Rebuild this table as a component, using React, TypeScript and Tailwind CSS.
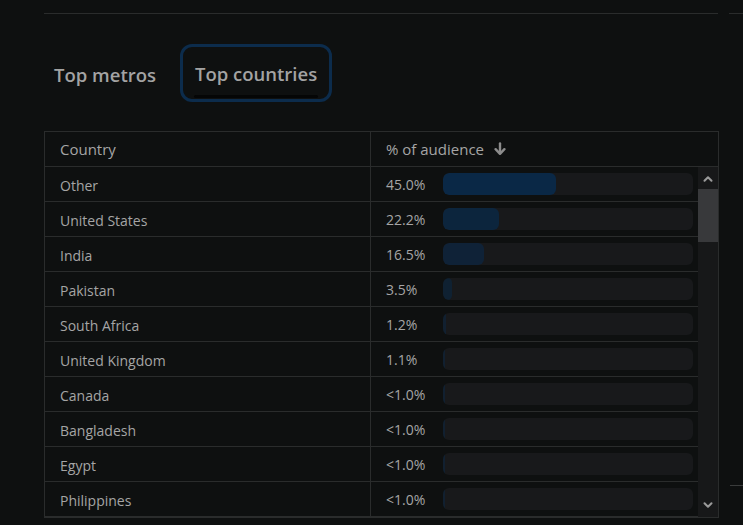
import { ChevronUp, ChevronDown } from "lucide-react";

interface Row {
  country: string;
  label: string;
  pct: number;
  tone: number;
}

const rows: Row[] = [
  { country: "Other", label: "45.0%", pct: 45, tone: 1 },
  { country: "United States", label: "22.2%", pct: 22.2, tone: 0.8 },
  { country: "India", label: "16.5%", pct: 16.5, tone: 0.65 },
  { country: "Pakistan", label: "3.5%", pct: 3.5, tone: 0.55 },
  { country: "South Africa", label: "1.2%", pct: 1, tone: 0.5 },
  { country: "United Kingdom", label: "1.1%", pct: 0.9, tone: 0.5 },
  { country: "Canada", label: "<1.0%", pct: 0.8, tone: 0.5 },
  { country: "Bangladesh", label: "<1.0%", pct: 0.8, tone: 0.5 },
  { country: "Egypt", label: "<1.0%", pct: 0.8, tone: 0.5 },
  { country: "Philippines", label: "<1.0%", pct: 0.8, tone: 0.5 },
];

const SortArrow = () => (
  <svg width="12" height="14" viewBox="0 0 12 14" className="text-[#8c8c8c]">
    <path d="M6 1.5v9" stroke="currentColor" strokeWidth="2.4" strokeLinecap="round" />
    <path d="M1.6 7.2L6 11.8l4.4-4.6" fill="none" stroke="currentColor" strokeWidth="2.4" strokeLinecap="round" strokeLinejoin="round" />
  </svg>
);

const App = () => {
  return (
    <div
      className="h-[525px] w-[743px] overflow-hidden bg-[#0e1010] text-[#a5a5a5]"
      style={{ fontFamily: '"Open Sans", "Noto Sans", sans-serif' }}
    >
      <div className="flex">
        <div className="ml-[44px] mt-[13px] h-px w-[674px] bg-[#2a2c2c]" />
        <div className="ml-[11px] mt-[13px] h-px flex-1 bg-[#2a2c2c]" />
      </div>

      {/* Tabs */}
      <div className="ml-[44px] mt-[30px] flex h-[58px] items-center gap-[14px]">
        <button className="px-[10px] pt-[4px] text-[18.5px] font-semibold text-[#a3a3a3]">
          Top metros
        </button>
        <button className="relative h-[58px] rounded-[12px] border-[3px] border-[#0c2c4c] px-[12px] pt-[2px] text-[18.5px] font-semibold text-[#a3a3a3]">
          Top countries
          <span className="absolute bottom-[1px] left-[11px] right-[11px] h-[3px] rounded-full bg-[#050606]" />
        </button>
      </div>

      <div className="flex">
        {/* Table */}
        <div className="ml-[44px] mt-[29px] w-[675px] border border-[#2a2c2c] text-[14px]">
          <div className="flex h-[35px] items-center border-b border-[#2a2c2c] text-[15px]">
            <div className="w-[326px] border-r border-[#2a2c2c] pl-[15px] leading-[34px]">
              Country
            </div>
            <div className="flex items-center gap-[10px] pl-[15px]">
              % of audience
              <SortArrow />
            </div>
          </div>
          <div className="flex h-[350px] overflow-hidden">
            <div className="flex-1">
              {rows.map((r) => (
                <div key={r.country} className="flex h-[35px] items-center border-b border-[#2a2c2c]">
                  <div className="h-full w-[326px] border-r border-[#2a2c2c] pl-[15px] pt-[2px] leading-[34px]">
                    {r.country}
                  </div>
                  <div className="w-[72px] pl-[15px] pt-[1px]">{r.label}</div>
                  <div className="mr-[5px] h-[22px] flex-1 overflow-hidden rounded-[6px] bg-[#18191b]">
                    <div
                      className="h-full rounded-[6px] bg-[#0a2846]"
                      style={{ width: `${r.pct}%`, opacity: r.tone }}
                    />
                  </div>
                </div>
              ))}
            </div>
            {/* Scrollbar */}
            <div className="flex w-[20px] flex-col items-center bg-[#171819]">
              <ChevronUp size={14} strokeWidth={3.5} className="mt-[5px] text-[#9a9a9a]" />
              <div className="mt-[3px] h-[53px] w-full bg-[#38393b]" />
              <div className="flex-1" />
              <ChevronDown size={14} strokeWidth={3.5} className="mb-[5px] text-[#9a9a9a]" />
            </div>
          </div>
        </div>
        <div className="ml-[11px] mt-[383px] h-px flex-1 bg-[#3a3c3c]" />
      </div>
    </div>
  );
};

export default App;
